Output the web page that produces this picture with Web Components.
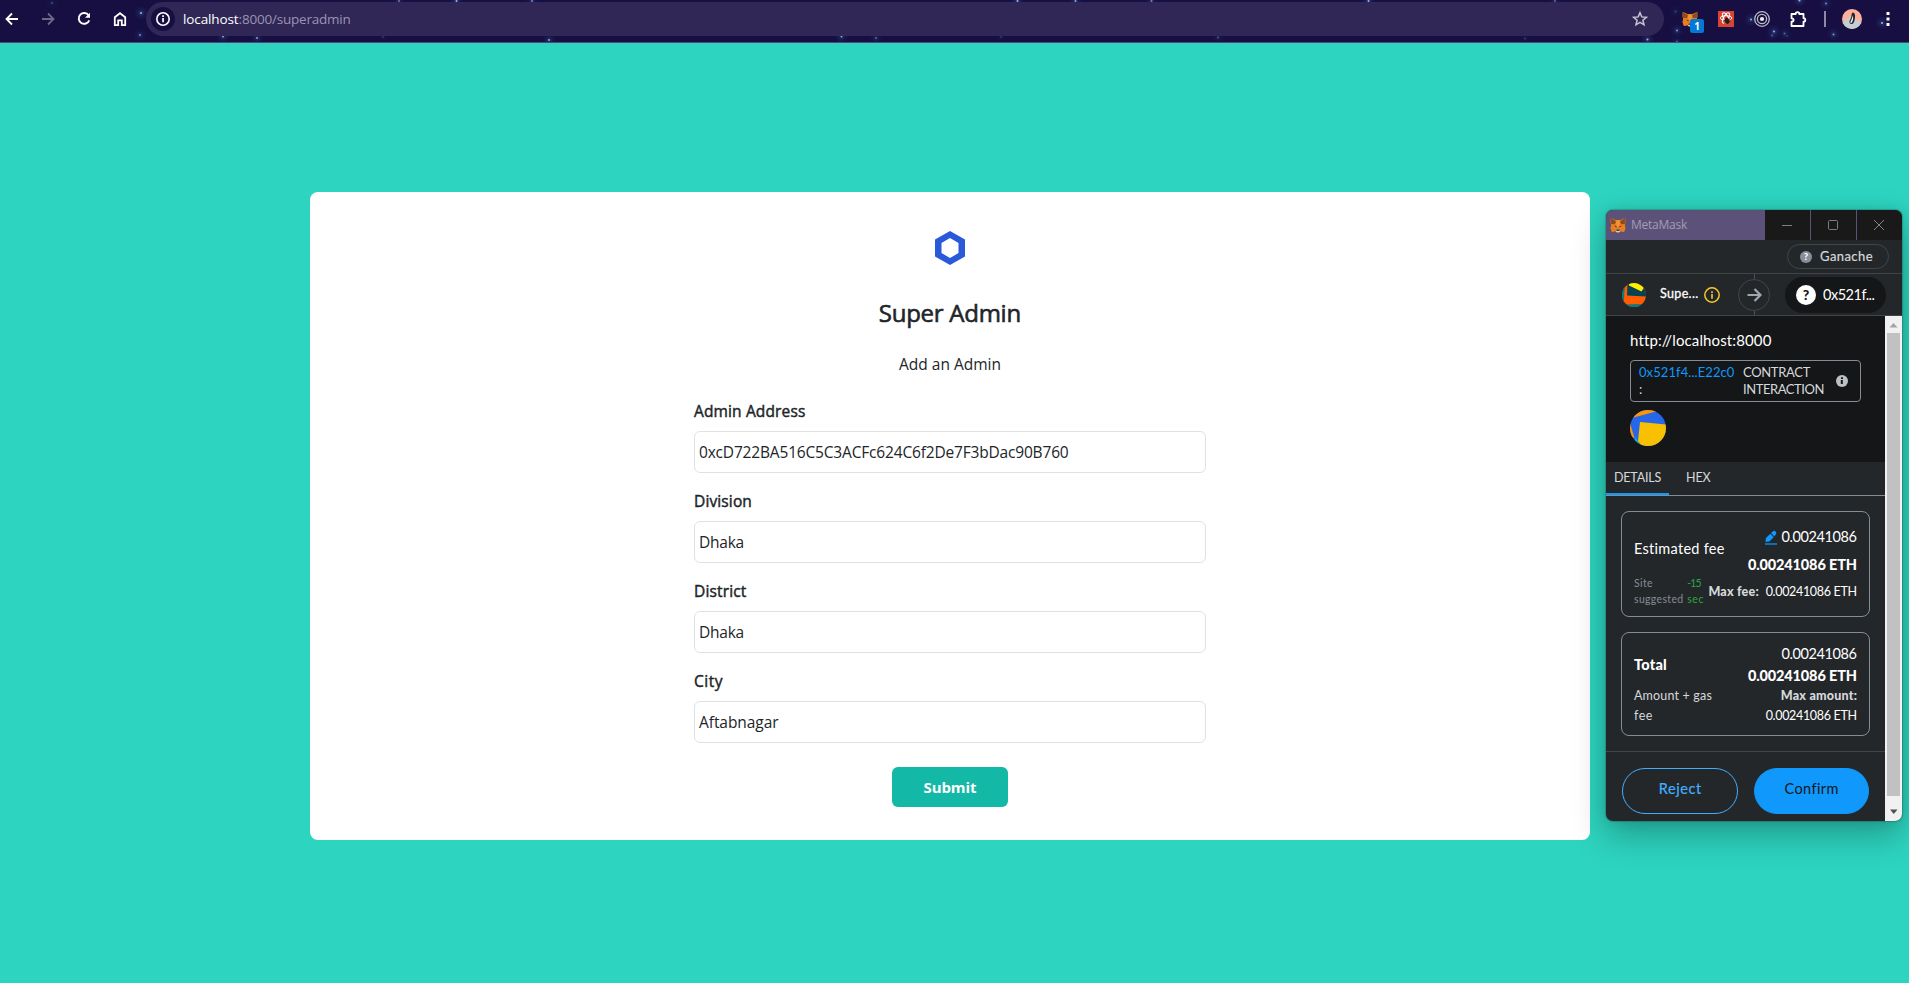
<!DOCTYPE html>
<html lang="en">
<head>
<meta charset="utf-8">
<title>Super Admin</title>
<style>
html,body{margin:0;height:100%;overflow:hidden;background:#2dd4bf;font-family:"Open Sans","Noto Sans",sans-serif}
</style>
</head>
<body>
<app-screen></app-screen>
<script>
const define=(name,css,html,after)=>customElements.define(name,class extends HTMLElement{
  connectedCallback(){
    if(this.shadowRoot)return;
    const a=n=>this.getAttribute(n)||'';
    this.attachShadow({mode:'open'}).innerHTML=`<style>${css}</style>`+(typeof html==='function'?html(a):html);
    if(after)after(this);
  }
});

/* A single line of text, tracked so that it fills the width in "w". */
define('fit-text',`:host{display:block;white-space:nowrap}span{display:inline-block;white-space:pre}`,`<span><slot></slot></span>`,el=>{
  const s=el.shadowRoot.querySelector('span'),w=+el.getAttribute('w');
  if(!w)return;
  const n=el.textContent.length,d=(w+1-s.getBoundingClientRect().width)/n;
  s.style.letterSpacing=d+'px';
  s.style.marginRight=-d+'px';
});

define('ui-icon',`:host{display:block;flex:none}svg{display:block;overflow:visible}`,a=>({
  back:`<svg width="16" height="16" fill="none" stroke="#fff" stroke-width="1.8"><path d="M14 8H3M8 2.5 2.5 8 8 13.500"/></svg>`,
  forward:`<svg width="16" height="16" fill="none" stroke="#6e6889" stroke-width="1.800"><path d="M2 8h11M8 2.500 13.500 8 8 13.500"/></svg>`,
  reload:`<svg width="16" height="16" fill="none" stroke="#fff" stroke-width="1.900"><path d="M12.600 4.300A5.400 5.400 0 1 0 13.200 9.300"/><path d="M14 1.800v5H9z" fill="#fff" stroke="none"/></svg>`,
  home:`<svg width="16" height="16" fill="none" stroke="#fff" stroke-width="1.800"><path d="M2.800 14.100V6.300L8 2.200l5.200 4.100v7.800H9.800V9.300H6.200v4.800z"/></svg>`,
  site:`<svg width="24" height="24"><circle cx="12" cy="12" r="12" fill="#170f3f"/><circle cx="12" cy="12" r="6.200" fill="none" stroke="#fff" stroke-width="1.600"/><path d="M11.200 11h1.700v4.300h-1.700zM11.200 8.300h1.700V10h-1.700z" fill="#fff"/></svg>`,
  star:`<svg width="16" height="16" fill="none" stroke="#c9c5d2" stroke-width="1.500"><path d="M8 1.700l1.800 4.200 4.600.4-3.500 3 1.100 4.500L8 11.400l-4 2.400 1.100-4.500-3.500-3 4.600-.4z"/></svg>`,
  fox:`<svg width="16" height="16" viewBox="0 0 16 16"><path d="M.8.700 6 3.300h4L15.200.700l.4 4.300-.8 3.200.6 3-1.400 3.900-3.200-.8-1.500 1.200H6.700l-1.500-1.200-3.200.800-1.400-3.900.6-3L.4 5z" fill="#e77b20"/><path d="M.800.700 6 4.500 4.800 7.200.900 6.800zM15.200.700 10 4.500l1.200 2.700 3.900-.4z" fill="#8c4b22"/><path d="M6 3.300h4l-.5 5.500L8 10 6.500 8.800z" fill="#f59432"/><path d="M1.200 8.200 5 8.600l1.400 3.500-1.100 2-3.300.9-1.400-3.900zM14.800 8.200 11 8.600l-1.400 3.500 1.100 2 3.300.9 1.400-3.900z" fill="#ed7c1f"/><path d="m4.300 8.700 2 .4.200 1.500zm7.400 0-2 .4-.2 1.500z" fill="#273047"/><path d="M6.100 12.600h3.800l.3 1.700-1 1H6.800l-1-1z" fill="#d8cec5"/><path d="M6.500 12.500h3l.3 1.300H6.200z" fill="#1f1b20"/></svg>`,
  badge:`<svg width="14" height="14"><rect width="14" height="14" rx="2.500" fill="#0478d6"/></svg>`,
  react:`<svg width="16" height="16"><path d="M0 0h16v16H0z" fill="#d94334"/><g fill="none" stroke="#fff" stroke-width="1"><ellipse cx="8" cy="7" rx="5.800" ry="2.300"/><ellipse cx="8" cy="7" rx="5.800" ry="2.300" transform="rotate(60 8 7)"/><ellipse cx="8" cy="7" rx="5.800" ry="2.300" transform="rotate(120 8 7)"/></g><ellipse cx="9.200" cy="10" rx="2.400" ry="3.200" fill="#3a1612" transform="rotate(-25 9 10)"/><path d="m5.500 9.500 7 1M12.500 8 6 12.500M8 6.500l1.500 2" stroke="#3a1612" stroke-width=".8"/></svg>`,
  target:`<svg width="16" height="16" fill="none" stroke="#bcbcc6"><circle cx="8" cy="8" r="7.300" stroke-width="1.300"/><circle cx="8" cy="8" r="4.600" stroke-width="1.300"/><circle cx="8" cy="8" r="2.100" fill="#ececf0" stroke="none"/></svg>`,
  puzzle:`<svg width="16" height="16"><path d="M1.500 3h4.200c0-2.600 3.600-2.600 3.600 0h4.200v4.200c2.400 0 2.400 3.400 0 3.400V15h-12v-4.300c2.800 0 2.800-3.400 0-3.400z" fill="none" stroke="#fff" stroke-width="1.800" stroke-linejoin="round"/></svg>`,
  avatar:`<svg width="20" height="20"><defs><clipPath id="c"><circle cx="10" cy="10" r="10"/></clipPath></defs><g clip-path="url(#c)"><path d="M0 0h20v20H0z" fill="#ffb09c"/><path d="M0 14 7 8l5 1 8 5v6H0z" fill="#c4cdd3"/><path d="M11 3.500c2 .3 2.200 2.500 2 5-.3 3-1 6-3 6.500-2.200.3-3-1.500-2.300-3.500 1.200-1.800 1.600-3.500 1.800-5.500C9.700 4.300 10.200 3.500 11 3.500z" fill="#26272c"/><path d="M10.900 6.500c.6 2 .2 6-1.700 7.800-1.500-.3-.7-1.800.2-3.500z" fill="#f5f2ef"/></g></svg>`,
  dots:`<svg width="4" height="16" fill="#fff"><path d="M.500 1h3v3h-3zM.500 6.500h3v3h-3zM.500 12h3v3h-3z"/></svg>`,
  hex:`<svg width="30" height="34"><path fill-rule="evenodd" d="M15 0 30 8.500v17L15 34 0 25.500v-17zm0 7L6.500 12v10l8.500 5 8.500-5V12z" fill="#2a5ada"/></svg>`,
  min:`<svg width="10" height="10" stroke="#7d7d7d"><path d="M0 5.500h10"/></svg>`,
  max:`<svg width="10" height="10" stroke="#7d7d7d" fill="none"><rect x=".5" y=".5" width="9" height="9" rx="1"/></svg>`,
  close:`<svg width="10" height="10" stroke="#858585"><path d="m0 0 10 10M10 0 0 10"/></svg>`,
  jazz1:`<svg width="24" height="24"><defs><clipPath id="c"><circle cx="12" cy="12" r="12"/></clipPath></defs><g clip-path="url(#c)"><path d="M0 0h24v24H0z" fill="#ff5c00"/><path d="M0 0h3L1.500 24H0z" fill="#047a83"/><path d="M5.500 0H24v13.500L5 12.500z" fill="#064254"/><path d="M7 2.500 19.500 8.500 22 4.500 14-1H7z" fill="#fff000"/><path d="M0 21.500 24 21v3H0z" fill="#047a83"/></g></svg>`,
  jazz2:`<svg width="36" height="36"><defs><clipPath id="c"><circle cx="18" cy="18" r="18"/></clipPath></defs><g clip-path="url(#c)"><path d="M0 0h36v36H0z" fill="#2567e8"/><path d="M0 8.500 28 1V0H0z" fill="#fa9408"/><path d="M0 13 4.500 28 0 26z" fill="#fa9408"/><path d="m5 27 7 9H4z" fill="#18a4c8"/><path d="M10 12 8 31l4 5h24V14.500z" fill="#f8c000"/></g></svg>`,
  info:`<svg width="16" height="16"><circle cx="8" cy="8" r="7.200" fill="none" stroke="#f8c82b" stroke-width="1.500"/><path d="M7.200 7h1.600v4.800H7.200zM7.200 4.300h1.600v1.600H7.200z" fill="#f8c82b"/></svg>`,
  infofill:`<svg width="12" height="12"><circle cx="6" cy="6" r="6" fill="#bbc0c5"/><path d="M4.800 5h2v4h-2zM5 2.300h2V4H5z" fill="#141618"/></svg>`,
  arrow:`<svg width="32" height="41" fill="none"><path d="M16.500 0v5M16.500 37v4" stroke="#4b5057"/><circle cx="16" cy="21" r="15.500" stroke="#41454a"/><path d="M9.500 21h12M16.500 15l6 6-6 6" stroke="#9fa6ae" stroke-width="2.200"/></svg>`,
  pencil:`<svg width="12" height="14"><path d="m.500 11 .4-4 4.400-4.200 3.400 3.400L4.400 10.500zM6 2.100 7.700.5c1-.9 2-.8 2.900.1.900.9.900 2 .1 2.800L9.400 5.500z" fill="#1098fc"/><path d="M0 12h12v2H0z" fill="#0f6fb6"/></svg>`
})[a('name')]);

define('star-field',`:host{position:absolute;inset:0;overflow:hidden}svg{display:block}`,()=>{
  const s=[[52,3,.3],[141,13,1],[140,35,.7],[223,36.500,.9],[257,38,.8],[383,37,.2],[399,1,.6],[456.500,1,1],[532,1,.7],[1017.500,1,1],[1075.500,1,.9],[1151.500,1,.7],[1368.500,1,1],[1555,1,.5],[549,40,.9],[841.500,36.500,.9],[876,38,.5],[1001,37,.2],[1218,37.500,.4],[1525,38.500,.25],[1751,19.500,1],[1774,31.500,1],[1784.500,33.500,.5],[1772,35.500,.4],[1799.500,.5,1],[1826,3.500,.7],[1833.500,34.500,.8],[1882,23,1],[1647.500,39.500,1],[1677,30.500,.8],[1675.500,11.500,.3],[1677,41.500,.4],[1787,36,.2]];
  return `<svg width="1909" height="42">${s.map(([x,y,o])=>`<circle cx="${x}" cy="${y}" r="6" fill="#234c8c" opacity="${o*.13}"/><circle cx="${x}" cy="${y}" r="3" fill="#3e6bb0" opacity="${o*.2}"/><circle cx="${x}" cy="${y}" r="1" fill="#aab4e2" opacity="${o}"/>`).join('')}</svg>`});

define('browser-bar',`
:host{display:flex;position:relative;box-sizing:border-box;height:43px;background:#170f42;border-bottom:1px solid #5a4377}
.row{position:relative;display:flex;align-items:center;height:38px;width:1909px}
.b{flex:none;width:36px;display:grid;place-items:center;position:relative}
.nav{display:flex;margin-left:-6px}
.omni{flex:none;box-sizing:border-box;margin:0 8px;width:1518px;height:34px;border-radius:17px;background:#302757;display:flex;align-items:center;padding:0 16px 0 5px;font-size:13.500px;line-height:22px;color:#9a94b2}
.omni .h{margin-left:8px;color:#fff}
.omni .s{margin-left:auto}
.sep{flex:none;width:2px;height:16px;margin:0 8px;background:#8e89a4}
.n{position:absolute;left:18px;top:8px;display:grid;font:bold 10px/14px "Open Sans",sans-serif;color:#fff}
.n>*{grid-area:1/1;text-align:center}`,
`<star-field></star-field><div class="row"><div class="nav">
<div class="b"><ui-icon name="back"></ui-icon></div><div class="b"><ui-icon name="forward"></ui-icon></div><div class="b"><ui-icon name="reload"></ui-icon></div><div class="b"><ui-icon name="home"></ui-icon></div></div>
<div class="omni"><ui-icon name="site"></ui-icon><fit-text class="h" w="54.500">localhost</fit-text><fit-text w="111">:8000/superadmin</fit-text><ui-icon class="s" name="star"></ui-icon></div>
<div class="b"><ui-icon name="fox"></ui-icon><div class="n"><ui-icon name="badge"></ui-icon><span>1</span></div></div>
<div class="b"><ui-icon name="react"></ui-icon></div><div class="b"><ui-icon name="target"></ui-icon></div><div class="b"><ui-icon name="puzzle"></ui-icon></div>
<div class="sep"></div><div class="b"><ui-icon name="avatar"></ui-icon></div><div class="b"><ui-icon name="dots"></ui-icon></div></div>`);

define('form-field',`
:host{display:block;height:90px;color:#212529;font-size:15.500px}
.l{height:24px;line-height:24px;-webkit-text-stroke:.45px;margin-bottom:8px}
.i{box-sizing:border-box;height:42px;border:1px solid #dee2e6;border-radius:6px;padding-left:4px;line-height:41px}`,
a=>`<div class="l"><fit-text w="${a('lw')}">${a('label')}</fit-text></div><div class="i"><fit-text w="${a('vw')}">${a('value')}</fit-text></div>`);

define('admin-card',`
:host{display:flex;flex-direction:column;align-items:center;box-sizing:border-box;width:1280px;height:648px;border-radius:8px;background:#fff;color:#212529;padding-top:39px}
h2{margin:30px 0 0;font-size:24px;line-height:36px;font-weight:400;-webkit-text-stroke:.6px}
p{margin:21px 0 0;font-size:15.500px;line-height:24px}
form{width:512px;margin-top:23px}
button{display:block;margin:8px auto 0;width:116px;height:40px;border:0;border-radius:6px;background:#14b8a6;color:#fff;font:bold 15px/24px "Open Sans",sans-serif;padding:0;text-align:center}
button fit-text{display:inline-block}`,
`<ui-icon name="hex"></ui-icon><h2><fit-text w="141">Super Admin</fit-text></h2><p><fit-text w="101">Add an Admin</fit-text></p>
<form><form-field label="Admin Address" lw="110.500" value="0xcD722BA516C5C3ACFc624C6f2De7F3bDac90B760" vw="368.500"></form-field>
<form-field label="Division" lw="57" value="Dhaka" vw="44"></form-field>
<form-field label="District" lw="51.500" value="Dhaka" vw="44"></form-field>
<form-field label="City" lw="28" value="Aftabnagar" vw="78.500"></form-field>
<button type="button"><fit-text w="52">Submit</fit-text></button></form>`);

define('title-bar',`
:host{display:flex;height:30px;background:#5c5279;font:12px/30px "Open Sans",sans-serif;color:#a39cb4}
.t{display:flex;align-items:center;flex:1;padding-left:4px;gap:5px;font-size:12px}
.t fit-text{margin-top:-1px}
.c{display:grid;grid-template-columns:45px 45px 45px;gap:1px}
.c div{background:#191919;display:grid;place-items:center}
.c ui-icon{margin-right:1px}`,
`<div class="t"><ui-icon name="fox"></ui-icon><fit-text w="55">MetaMask</fit-text></div><div class="c"><div><ui-icon name="min"></ui-icon></div><div><ui-icon name="max"></ui-icon></div><div><ui-icon name="close"></ui-icon></div></div>`);

define('account-header',`
:host{display:block;color:#fff}
.net{display:flex;justify-content:flex-end;box-sizing:border-box;height:34px;padding:4px 13px 0 0;border-bottom:1px solid #41454a}
.pill{display:flex;align-items:center;box-sizing:border-box;width:102px;height:25px;border:1px solid #41454a;border-radius:13px;padding-left:12px;font-size:13px;line-height:20px;color:#d6d9dc}
.pill fit-text{position:relative;top:-1px;-webkit-text-stroke:.2px}
.q{flex:none;display:grid;place-items:center;width:12px;height:12px;border-radius:50%;background:#878e9a;color:#fff;font-weight:900;font-size:9.500px;line-height:12px}
.acc{display:flex;align-items:center;height:41px;border-bottom:1px solid #41454a}
.acc>ui-icon:first-child{margin:0 14px 0 16px}
.name{width:38px;margin:-2px 6px 0 0;font-size:12.500px;line-height:19px;-webkit-text-stroke:.3px}
.acc .arr{margin-left:18px}
.to{display:flex;align-items:center;box-sizing:border-box;width:101px;height:36px;margin-left:15px;padding-left:11px;border-radius:18px;background:#141618;font-size:14.500px;line-height:20px}
.to .q{width:20px;height:20px;background:#fff;color:#141618;font-size:14px;line-height:20px;margin-right:7px}`,
`<div class="net"><div class="pill"><span class="q" style="margin-right:8px">?</span><fit-text w="52">Ganache</fit-text></div></div>
<div class="acc"><ui-icon name="jazz1"></ui-icon><fit-text class="name" w="37.500">Supe...</fit-text><ui-icon name="info"></ui-icon><ui-icon class="arr" name="arrow"></ui-icon><div class="to"><span class="q">?</span><fit-text w="50.500">0x521f...</fit-text></div></div>`);

define('tx-summary',`
:host{display:block;box-sizing:border-box;height:146px;padding:14px 24px 0;background:#141618;color:#fff;font-size:15px;line-height:20px}
.o{height:30px;line-height:21px}
.k{box-sizing:border-box;width:231px;height:42px;border:1px solid #848c96;border-radius:4px;display:flex;align-items:center;padding:0 12px 0 8px;font-size:13px;line-height:17px;color:#d6d9dc}
.k>div{width:104px}
.k .a{color:#1098fc}
.k ui-icon{margin-left:auto}
.j{margin-top:8px}`,
`<div class="o"><fit-text w="140">http://localhost:8000</fit-text></div>
<div class="k"><div><fit-text class="a" w="94.500">0x521f4...E22c0</fit-text><fit-text>:</fit-text></div><div style="width:82px"><fit-text w="66">CONTRACT</fit-text><fit-text w="80">INTERACTION</fit-text></div><ui-icon name="infofill"></ui-icon></div>
<ui-icon class="j" name="jazz2"></ui-icon>`);

define('tab-strip',`
:host{display:flex;box-sizing:border-box;height:34px;border-bottom:1px solid #848c96;font-size:12.500px;line-height:30px;color:#d6d9dc}
.t{box-sizing:border-box;height:33px;padding-top:1px;padding-left:8px;width:63px}
.on{border-bottom:2px solid #1098fc}
.t+.t{padding-left:17px}`,
`<div class="t on"><fit-text w="46">DETAILS</fit-text></div><div class="t"><fit-text w="23.500">HEX</fit-text></div>`);

define('fee-card',`
:host{display:flex;box-sizing:border-box;width:249px;margin-left:15px;border:1px solid #848c96;border-radius:8px;color:#fff;font-size:14.500px;padding:0 12px}
.l{flex:1;min-width:0}.r{flex:none}
::slotted(*){display:block}`,
`<div class="l"><slot name="left"></slot></div><div class="r"><slot name="right"></slot></div>`);

define('scroll-track',`
:host{display:flex;flex-direction:column;align-items:center;width:17px;background:#f1f1f1}
svg{display:block;flex:none}.th{width:13px;flex:1;background:#c1c1c1}`,
`<svg width="17" height="17"><path d="m8.500 7 4 4.500h-8z" fill="#a3a3a3"/></svg><div class="th"></div><svg width="17" height="25"><path d="m5 13.500h7.500l-3.750 4.500z" fill="#505050"/></svg>`);

define('wallet-window',`
:host{display:block;width:296px;height:611px;border-radius:7px;overflow:hidden;background:#24272a;font-family:Lato,"Open Sans",sans-serif;box-shadow:0 0 1px 1px rgba(0,0,0,.18),0 0 14px rgba(0,0,0,.1),0 14px 34px rgba(0,0,0,.27)}
.body{display:flex;height:505px}
.main{width:279px;display:flex;flex-direction:column}
.f1{height:106px;margin-top:15px}
.f2{height:104px;margin-top:15px}
.ft{display:flex;gap:16px;border-top:1px solid #41454a;margin-top:15px;padding:16px 0 0 16px;height:53px;font-size:14.500px}
.btn{box-sizing:border-box;width:116px;height:46px;border-radius:23px;border:1px solid #43aefc;color:#43aefc;line-height:40px;display:flex;justify-content:center;-webkit-text-stroke:.2px}
.ok{width:115px;background:#1098fc;border-color:#1098fc;color:#141618;-webkit-text-stroke:0}
.bold{font-weight:900}.mut{color:#d6d9dc}.s{font-size:12.500px}
.rw{display:flex;justify-content:flex-end;line-height:20px}
.xs{display:flex;gap:4px;font-size:10.500px;line-height:16px;color:#848c96}
.gr{color:#28a745}`,
`<title-bar></title-bar><account-header></account-header>
<div class="body"><div class="main"><tx-summary></tx-summary><tab-strip></tab-strip>
<fee-card class="f1"><div slot="left"><fit-text w="90" style="line-height:20px;padding-top:27px">Estimated fee</fit-text><div class="xs" style="margin-top:16px"><div><fit-text w="18">Site</fit-text><fit-text w="48.500">suggested</fit-text></div><div class="gr"><fit-text w="12.500">-15</fit-text><fit-text w="16">sec</fit-text></div></div></div>
<div slot="right"><div class="rw" style="gap:5px;height:20px;padding-top:15px"><ui-icon name="pencil" style="margin-top:4px"></ui-icon><fit-text w="74">0.00241086</fit-text></div>
<div class="rw bold" style="margin-top:8px"><fit-text w="108">0.00241086 ETH</fit-text></div>
<div class="rw s" style="gap:7px;margin-top:7px"><fit-text class="bold mut" w="49.500">Max fee:</fit-text><fit-text w="90">0.00241086 ETH</fit-text></div></div></fee-card>
<fee-card class="f2"><div slot="left"><fit-text class="bold" w="32" style="line-height:20px;padding-top:22px">Total</fit-text><div class="s mut" style="line-height:20px;margin-top:11px"><fit-text w="77">Amount + gas</fit-text><fit-text w="18">fee</fit-text></div></div>
<div slot="right" style="text-align:right"><fit-text w="74" style="line-height:22px;padding-top:10px">0.00241086</fit-text><fit-text class="bold" w="108" style="line-height:22px">0.00241086 ETH</fit-text><div class="s" style="line-height:20px;margin-top:-1px"><fit-text class="bold mut" w="75.500">Max amount:</fit-text><fit-text w="90">0.00241086 ETH</fit-text></div></div></fee-card>
<div class="ft"><div class="btn"><fit-text w="42">Reject</fit-text></div><div class="btn ok"><fit-text w="53">Confirm</fit-text></div></div>
</div><scroll-track></scroll-track></div>`);

define('app-screen',`
:host{display:flex;flex-direction:column;width:1909px;height:983px;position:relative;overflow:hidden;background:#2dd4bf}
main{display:flex;justify-content:center;padding:149px 9px 0 0}
wallet-window{position:absolute;left:1606px;top:210px}`,
`<browser-bar></browser-bar><main><admin-card></admin-card></main><wallet-window></wallet-window>`);
</script>
</body>
</html>
